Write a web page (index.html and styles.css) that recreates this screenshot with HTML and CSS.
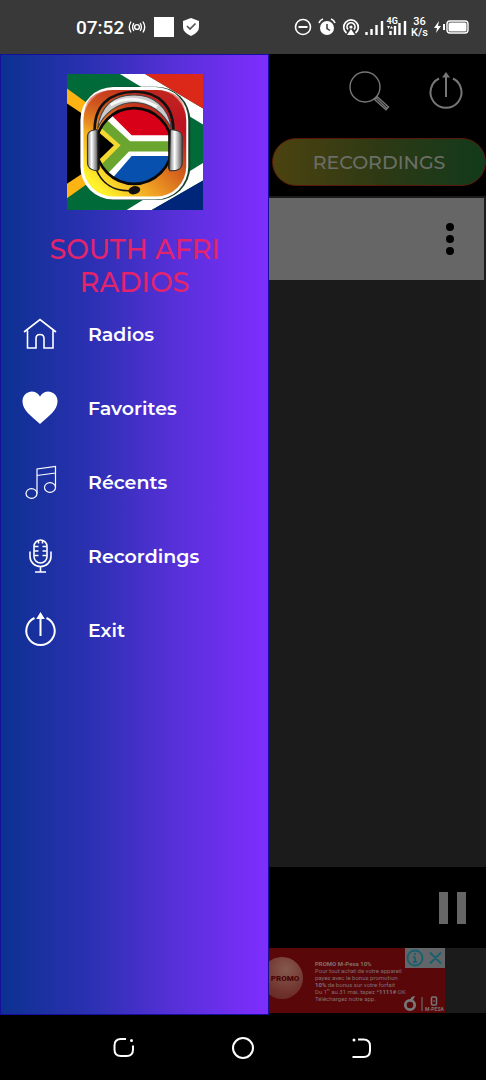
FILE: index.html
```html
<!DOCTYPE html>
<html lang="en">
<head>
<meta charset="utf-8">
<meta name="viewport" content="width=device-width, initial-scale=1">
<title>South Afri Radios</title>
<link rel="stylesheet" href="styles.css">
</head>
<body>
<div class="phone">
  <header class="status">
    <div class="status-left">
      <span class="clock">07:52</span>
      <svg class="cast" viewBox="0 0 18 14" fill="none" stroke="#fff" stroke-width="1.4" stroke-linecap="round"><circle cx="9" cy="7" r="2.4"/><path d="M5.6 3.6q-2 3.4 0 6.800M12.400 3.600q2 3.400 0 6.800M2.800 2q-3 5 0 10M15.200 2q3 5 0 10"/></svg>
      <span class="tile"></span>
      <svg class="shield" viewBox="0 0 18 20"><path fill="#fff" d="M9 1 17 4v6q0 5.500-8 9-8-3.500-8-9V4z"/><path d="M5 9l3 3 5.500-5.500" fill="none" stroke="#555" stroke-width="1.700"/></svg>
    </div>
    <div class="status-right">
      <svg class="round" viewBox="0 0 18 18" fill="none" stroke="#fff"><circle cx="9" cy="9" r="7.500" stroke-width="1.600"/><path d="M4.500 9h9" stroke-width="2"/></svg>
      <svg class="round" viewBox="0 0 18 18"><circle cx="9" cy="10" r="7" fill="#fff"/><path d="M1 5q1-3 4-4M17 5q-1-3-4-4" fill="none" stroke="#fff" stroke-width="1.600"/><path d="M9 6v4.500l3 2" fill="none" stroke="#393939" stroke-width="1.500"/></svg>
      <svg class="round" viewBox="0 0 18 18" fill="none" stroke="#fff" stroke-width="1.700"><path d="M4.500 15a7.300 7.300 0 1 1 9 0M6 11.500a4 4 0 1 1 6 0"/><circle cx="9" cy="9" r="1.600" fill="#fff" stroke="none"/><path d="M9 11l4 6H5z" fill="#fff" stroke="none"/></svg>
      <svg class="signal" viewBox="0 0 42 22"><path d="M1.500 19v-3M6.500 19v-6M11.500 19V9M17 19V5M30 19v-9M34.500 19V7M40 19V5M25.500 19v-4" stroke="#fff" stroke-width="2.400"/><path d="M22 10h3l-1.500 3zM25 12.500h3L26.500 10z" fill="#fff"/><text x="21.500" y="8" class="signal-label">4G</text></svg>
      <span class="speed">36<br>K/s</span>
      <svg class="battery" viewBox="0 0 36 16"><path d="M5 2 0 9h3l-1 5 5-7H4z" fill="#fff"/><path d="M10 5v6" stroke="#fff" stroke-width="2"/><rect x="13" y="2" width="21" height="12" rx="3" fill="none" stroke="#fff" stroke-width="1.400"/><rect x="14.500" y="3.500" width="18" height="9" rx="1.500" fill="#fff"/></svg>
    </div>
  </header>

  <div class="stage">
    <main class="app">
      <div class="toolbar">
        <button class="tool" aria-label="Search"><svg viewBox="0 0 42 42" fill="none" stroke="#777" stroke-width="1.400"><circle cx="17" cy="17" r="15"/><path d="M26.500 29.500l2.800-2.800L40.500 37l-2.500 2.800zM28 28l11 10.500"/></svg></button>
        <button class="tool" aria-label="Exit"><svg viewBox="0 0 42 42" fill="none" stroke="#777" stroke-width="2"><path d="M14 8.500a15.500 15.500 0 1 0 14 0M21 5v22"/><path d="M17 7.500 21 2l4 5.500z" fill="#777" stroke="none"/></svg></button>
      </div>
      <div class="tabs"><button class="tab">RECORDINGS</button></div>
      <section class="list">
        <div class="row"><button class="more" aria-label="More options"><i></i><i></i><i></i></button></div>
      </section>
      <div class="player"><button class="pause" aria-label="Pause"><i></i><i></i></button></div>
      <aside class="ad-strip">
        <div class="ad">
          <div class="globe">PROMO</div>
          <p class="ad-text"><b>PROMO M-Pesa 10%</b><br>Pour tout achat de votre appareil<br>payez avec le bonus promotion<br><b>10%</b> de bonus sur votre forfait<br>Du 1<sup>er</sup> au 31 mai, tapez *<b>1111#</b> OK<br>Téléchargez notre app.</p>
          <div class="ad-side">
            <div class="ad-choices">
              <svg viewBox="0 0 40 20" fill="none" stroke="#17616f" stroke-width="1.800"><circle cx="10" cy="10" r="7.500"/><path d="M10 9v5M8 9h2M8 14h4M10 5v2M25 4.500l11 11M36 4.500l-11 11"/></svg>
            </div>
            <svg class="ad-logos" viewBox="0 0 42 18"><circle cx="7" cy="10" r="4.700" fill="none" stroke="#777" stroke-width="2.800"/><path d="M7 5q1-4 5-4-1 3-3 5z" fill="#777"/><path d="M19 2v14" stroke="#777"/><rect x="28.500" y="2" width="5" height="8" rx="1" fill="none" stroke="#777" stroke-width="1.500"/><path d="M30 6h2" stroke="#777"/><text x="22" y="16" class="ad-brand">M-PESA</text></svg>
          </div>
        </div>
      </aside>
    </main>

    <nav class="drawer" aria-label="Main menu">
      <svg class="logo" viewBox="22 27 406 406" role="img" aria-label="South African flag with headphones">
        <defs>
          <linearGradient id="plate" x1="0" y1="1" x2="1" y2="0"><stop offset=".12" stop-color="#fff12b"/><stop offset=".38" stop-color="#ee9a23"/><stop offset=".6" stop-color="#cf5a1c"/><stop offset=".8" stop-color="#bd0f21"/></linearGradient>
          <linearGradient id="plateTop" x1="0" y1="0" x2="0" y2="1"><stop offset="0" stop-color="#c2301c" stop-opacity=".7"/><stop offset="1" stop-color="#c2301c" stop-opacity="0"/></linearGradient>
          <linearGradient id="metal" x1="0" y1="0" x2="1" y2="0"><stop offset="0" stop-color="#777"/><stop offset=".4" stop-color="#fff"/><stop offset="1" stop-color="#555"/></linearGradient>
          <clipPath id="disc"><circle cx="222" cy="242" r="113"/></clipPath>
        </defs>
        <path fill="#006b38" d="M22 27h406v406H22z"/>
        <path fill="#fff" d="M180 27h75l173 103v48zM428 293v52L275 433h-75z"/>
        <path fill="#dc2818" d="M255 27h173v103z"/>
        <path fill="#00267a" d="M428 345v88H275z"/>
        <path fill="#fcb415" d="M22 70l228 165L22 398z"/>
        <path d="M22 115l180 120L22 355z"/>
        <rect x="64" y="65" width="326" height="338" rx="100" fill="#173d2b"/>
        <rect x="62" y="66" width="322" height="336" rx="98" fill="#fff"/>
        <rect x="71" y="75" width="307" height="318" rx="90" fill="url(#plate)"/>
        <path d="M71 200v-35q0-90 90-90h127q90 0 90 90v35z" fill="url(#plateTop)"/>
        <g clip-path="url(#disc)">
          <path fill="#fff" d="M100 120h250v240H100z"/>
          <path fill="#d80019" d="M165 110h190v100H215L155 150z"/>
          <path fill="#0750ae" d="M350 272H215L160 335l20 40h170z"/>
          <path fill="#6aa52f" d="M90 117l120 111h150v30H207L90 380z"/>
          <path fill="#f4d832" d="M100 166l82 74-82 82z"/>
          <path d="M90 178l72 62-72 70z"/>
        </g>
        <circle cx="222" cy="242" r="113" fill="none" stroke="#080808" stroke-width="8"/>
        <path d="M105 205C100 120 150 82 222 80s122 44 117 125" fill="none" stroke="#111" stroke-width="8"/>
        <path d="M113 190C123 119 164 90 222 90s102 34 112 100C311 142 270 112 222 112S132 143 113 190z" fill="#ccc" stroke="#444" stroke-width="3"/>
        <path d="M152 119q65-36 139 6" fill="none" stroke="#f7f7f7" stroke-width="9"/>
        <path d="M107 306c18 50 58 73 110 69" fill="none" stroke="#111" stroke-width="5"/>
        <ellipse cx="223" cy="374" rx="18" ry="12" fill="#111" transform="rotate(-15 223 374)"/>
        <rect x="99" y="198" width="21" height="118" rx="9" fill="#111"/>
        <rect x="324" y="198" width="21" height="118" rx="9" fill="#111"/>
        <path d="M112 193q-29 2-29 20v80q0 22 31 23z" fill="url(#metal)" stroke="#333" stroke-width="3"/>
        <path d="M331 193q35 2 35 20v80q0 25-38 23z" fill="url(#metal)" stroke="#333" stroke-width="3"/>
      </svg>
      <h1 class="title">SOUTH AFRI RADIOS</h1>
      <ul class="menu">
        <li><a class="item" href="#radios"><svg viewBox="0 0 36 36" fill="none" stroke="#fff" stroke-width="1.600"><path d="M2 16 18 3.500 34 16M5.500 14.500V32H14V22.500q0-4 4-4t4 4V32h9V14.500"/></svg>Radios</a></li>
        <li><a class="item" href="#favorites"><svg viewBox="0 0 36 36"><path fill="#fff" d="M18 34C9 26 .5 20 .5 11.500A9.300 9.300 0 0 1 18 6.500a9.300 9.300 0 0 1 17.500 5C35.500 20 27 26 18 34z"/></svg>Favorites</a></li>
        <li><a class="item" href="#recents"><svg viewBox="0 0 36 36" fill="none" stroke="#fff" stroke-width="1.200"><ellipse cx="9.500" cy="29.500" rx="5.500" ry="4.800"/><ellipse cx="28" cy="23.500" rx="5.500" ry="4.800"/><path d="M15 29.500V5L33.500 2.500v21M15 11.500l18.500-2.500"/></svg>Récents</a></li>
        <li><a class="item" href="#recordings"><svg viewBox="0 0 36 36" fill="none" stroke="#fff" stroke-width="1.600"><rect x="12" y="2" width="13" height="23" rx="6.500"/><path d="M8 13.500v5a10.500 10 0 0 0 21 0v-5M18.500 28.500V34M13 34h11M12.500 8.500h4M12.500 13h4M12.500 17.500h4M24.500 8.500h-4M24.500 13h-4M24.500 17.500h-4M16.500 2.500v3M20.500 2.500v3"/></svg>Recordings</a></li>
        <li><a class="item" href="#exit"><svg viewBox="0 0 36 36" fill="none" stroke="#fff" stroke-width="2"><path d="M12.500 6a14.200 14.200 0 1 0 12 0M18.500 5v19"/><path d="M16 6 18.500 2 21 6z" fill="#fff"/></svg>Exit</a></li>
      </ul>
    </nav>
  </div>

  <footer class="nav-bar">
    <button class="nav-key" aria-label="Recent apps"><svg viewBox="0 0 24 24"><path d="M14 3H9Q2.500 3 2.500 9.500v4Q2.500 20 9 20h5.500q6.500 0 6.500-6.500v-4"/><path d="M19.500 4.500v.1" stroke-linecap="round" stroke-width="3"/></svg></button>
    <button class="nav-key" aria-label="Home"><svg viewBox="0 0 24 24"><circle cx="12" cy="12" r="10"/></svg></button>
    <button class="nav-key" aria-label="Back"><svg viewBox="0 0 24 24"><path d="M8 3.500h5.500q6.500 0 6.500 6.500v4.500q0 6.500-6.500 6.500H2.500"/><path d="M4 4v.1" stroke-linecap="round" stroke-width="3"/></svg></button>
  </footer>
</div>
</body>
</html>
```
FILE: styles.css
```css
* { box-sizing: border-box; }
body { margin: 0; background: #000; font-family: Montserrat, Inter, "Open Sans", sans-serif; }
button { margin: 0; padding: 0; border: 0; background: none; font: inherit; }
svg { display: block; }
.phone { display: flex; flex-direction: column; min-height: 100vh; }

.status { display: flex; justify-content: space-between; align-items: center; height: 54px; padding: 0 16px 0 76px; background: #393939; color: #fff; font-family: Roboto, sans-serif; }
.status-left, .status-right { display: flex; align-items: center; }
.status-right { gap: 6px; }
.clock { font-size: 19px; font-weight: 500; }
.cast { width: 18px; height: 14px; margin-left: 4px; }
.tile { width: 20px; height: 20px; margin-left: 8px; background: #fff; }
.shield { width: 18px; height: 20px; margin-left: 8px; }
.round { width: 18px; height: 18px; }
.signal { width: 42px; height: 22px; margin-left: -1px; }
.signal-label { font-size: 9px; font-weight: 700; fill: #fff; }
.speed { margin-left: -2px; font-size: 11px; line-height: 11px; font-weight: 500; text-align: center; }
.battery { width: 36px; height: 16px; }

.stage { position: relative; flex: 1; display: flex; }
.app { flex: 1; display: flex; flex-direction: column; background: #000; }
.toolbar { display: flex; justify-content: flex-end; align-items: center; gap: 35px; height: 74px; padding-right: 19px; }
.tool svg { width: 42px; height: 42px; }
.tabs { display: flex; justify-content: flex-end; padding: 10px 0; }
.tab { width: 44%; height: 48px; border: 1px solid #5a1708; border-radius: 24px; background: linear-gradient(90deg, #4c4310, #2e3914 50%, #123a1b); color: #6b6e66; font-size: 19px; font-weight: 500; }
.list { flex: 1; padding: 2px 2px 0 0; background: #1b1b1b; }
.row { display: flex; justify-content: flex-end; align-items: center; height: 82px; padding-right: 30px; background: #666; }
.more { display: flex; flex-direction: column; gap: 4px; }
.more i { width: 8px; height: 8px; border-radius: 50%; background: #000; }
.player { display: flex; justify-content: flex-end; align-items: center; height: 81px; padding-right: 20px; }
.pause { display: flex; gap: 9px; }
.pause i { width: 9px; height: 32px; background: #666; }
.ad-strip { display: flex; justify-content: center; height: 67px; background: #1b1b1b; border-bottom: 2px solid #000; }
.ad { display: flex; justify-content: flex-end; width: 404px; background: #5a070a; color: #817070; }
.globe { flex: none; display: flex; align-items: center; justify-content: center; width: 42px; height: 42px; margin-top: 9px; padding-left: 6px; border-radius: 50%; background: radial-gradient(circle at 60% 30%, #85594e, #70332c 60%, #60201c); color: #480406; font: 900 8px Roboto, sans-serif; }
.ad-text { flex: none; width: 88px; margin: 12px 0 0 12px; font: 6px/7px Roboto, sans-serif; white-space: nowrap; }
.ad-text sup { font-size: 3px; line-height: 0; }
.ad-side { display: flex; flex-direction: column; justify-content: space-between; align-items: flex-end; width: 42px; }
.ad-choices { width: 40px; height: 20px; background: #626669; }
.ad-logos { width: 42px; height: 18px; }
.ad-brand { font: 700 5px Roboto, sans-serif; fill: #777; }

/* Drawer slides over the app content */
.drawer { position: absolute; top: 0; bottom: 0; left: 0; width: 55.4%; padding-top: 19px; border: 1px solid #160f9b; background: linear-gradient(90deg, #0c3191, #2d30b4 35%, #5730d8 65%, #7c2efb 97%); }
.logo { width: 136px; height: 136px; margin: 0 auto; }
.title { margin: 23px 40px 0; color: #e3246d; font-size: 27px; line-height: 33px; font-weight: 500; text-align: center; }
.menu { display: flex; flex-direction: column; gap: 4px; margin: 0; padding: 0; list-style: none; }
.item { display: flex; align-items: center; gap: 30px; height: 70px; padding-left: 21px; color: #fff; font-size: 19px; font-weight: 600; text-decoration: none; }
.item svg { width: 36px; height: 36px; }

.nav-bar { display: flex; justify-content: space-between; align-items: center; height: 65px; padding: 0 112px; background: #000; }
.nav-key svg { width: 24px; height: 24px; fill: none; stroke: #fff; stroke-width: 2; }
```
